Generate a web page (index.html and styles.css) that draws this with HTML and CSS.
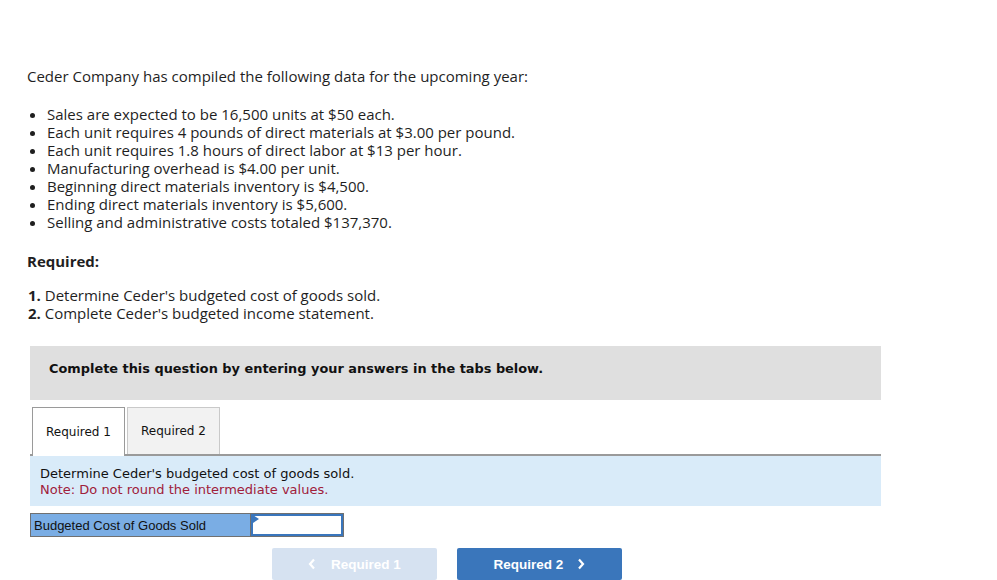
FILE: index.html
```html
<!DOCTYPE html>
<html>
<head>
<meta charset="utf-8">
<link rel="stylesheet" href="styles.css">
</head>
<body>
<div class="page">
  <p class="intro">Ceder Company has compiled the following data for the upcoming year:</p>
  <ul class="data">
    <li>Sales are expected to be 16,500 units at $50 each.</li>
    <li>Each unit requires 4 pounds of direct materials at $3.00 per pound.</li>
    <li>Each unit requires 1.8 hours of direct labor at $13 per hour.</li>
    <li>Manufacturing overhead is $4.00 per unit.</li>
    <li>Beginning direct materials inventory is $4,500.</li>
    <li>Ending direct materials inventory is $5,600.</li>
    <li>Selling and administrative costs totaled $137,370.</li>
  </ul>
  <p class="req-title">Required:</p>
  <ol class="reqs">
    <li><b>1.</b> Determine Ceder's budgeted cost of goods sold.</li>
    <li><b>2.</b> Complete Ceder's budgeted income statement.</li>
  </ol>
  <div class="question">
    <div class="banner">Complete this question by entering your answers in the tabs below.</div>
    <div class="tabs">
      <div class="tab active">Required 1</div>
      <div class="tab">Required 2</div>
    </div>
    <div class="panel">
      <div>Determine Ceder's budgeted cost of goods sold.</div>
      <div class="note">Note: Do not round the intermediate values.</div>
    </div>
    <div class="answer">
      <div class="label">Budgeted Cost of Goods Sold</div>
      <div class="input"><span class="flag"></span></div>
    </div>
    <div class="nav">
      <div class="btn disabled"><svg class="chev left" width="8" height="12" viewBox="0 0 8 12"><polyline points="6,1.5 2,6 6,10.5" fill="none" stroke="#fff" stroke-width="2.2"/></svg>Required 1</div>
      <div class="btn primary">Required 2<svg class="chev right" width="8" height="12" viewBox="0 0 8 12"><polyline points="2,1.5 6,6 2,10.5" fill="none" stroke="#fff" stroke-width="2.2"/></svg></div>
    </div>
  </div>
</div>
</body>
</html>
```
FILE: styles.css
```css
html, body {
  margin: 0;
  padding: 0;
  background: #fff;
}
.page {
  padding: 66px 0 0 27px;
  font-family: "Open Sans", "Liberation Sans", sans-serif;
  font-size: 15px;
  color: #1f1f1f;
}
.intro {
  margin: 0 0 19px 0;
  line-height: 20px;
}
.data {
  margin: 0;
  padding-left: 20px;
  line-height: 18px;
}
.req-title {
  margin: 20px 0 0 0;
  font-weight: bold;
  line-height: 20px;
}
.reqs {
  list-style: none;
  margin: 15px 0 0 0;
  padding: 0 0 0 1px;
  line-height: 18px;
}
.question {
  margin: 24px 0 0 3px;
  width: 851px;
  font-family: "DejaVu Sans", Verdana, sans-serif;
}
.banner {
  background: #dfdfdf;
  height: 54px;
  box-sizing: border-box;
  padding: 15px 0 0 19px;
  line-height: 16px;
  font-weight: bold;
  font-size: 12.9px;
  color: #111;
}
.tabs {
  display: flex;
  gap: 2px;
  margin-top: 7px;
  padding-left: 2px;
  border-bottom: 2px solid #9a9a9a;
}
.tab {
  width: 91px;
  height: 46px;
  display: flex;
  align-items: center;
  justify-content: center;
  font-size: 12px;
  color: #111;
  background: #f2f2f2;
  border: 1px solid #c9c9c9;
  border-bottom: none;
}
.tab.active {
  background: #fff;
  border-color: #9a9a9a;
  border-width: 1px 1px 0 1px;
  margin-bottom: -2px;
  height: 47px;
  padding-bottom: 1px;
}
.panel {
  background: #d9ebf9;
  padding: 10px 10px 8px 10px;
  font-size: 13px;
  line-height: 16px;
  color: #111;
}
.note {
  color: #a0203a;
}
.answer {
  display: flex;
  margin-top: 7px;
  width: 312px;
  height: 22px;
  border: 1px solid #707070;
  font-family: "Liberation Sans", Arial, sans-serif;
}
.label {
  width: 216px;
  background: #7aade4;
  border-right: 1px solid #707070;
  font-size: 13px;
  color: #111;
  padding-left: 3px;
  display: flex;
  align-items: center;
}
.input {
  flex: 1;
  position: relative;
  background: #fff;
  border: 2px solid #3a76bd;
}
.flag {
  position: absolute;
  left: 0;
  top: -1px;
  width: 0;
  height: 0;
  border-top: 4px solid transparent;
  border-bottom: 4px solid transparent;
  border-left: 6px solid #3a76bd;
}
.nav {
  display: flex;
  justify-content: center;
  gap: 20px;
  margin-top: 11px;
  padding-right: 17px;
}
.btn {
  width: 165px;
  height: 32px;
  border-radius: 2px;
  display: flex;
  align-items: center;
  justify-content: center;
  font-family: "Liberation Sans", Arial, sans-serif;
  font-weight: bold;
  font-size: 13.5px;
  color: #fff;
}
.btn.disabled {
  background: #d6e2f1;
}
.btn.primary {
  background: #3a76bb;
}
.chev.left {
  margin-right: 15px;
}
.chev.right {
  margin-left: 14px;
}
```
